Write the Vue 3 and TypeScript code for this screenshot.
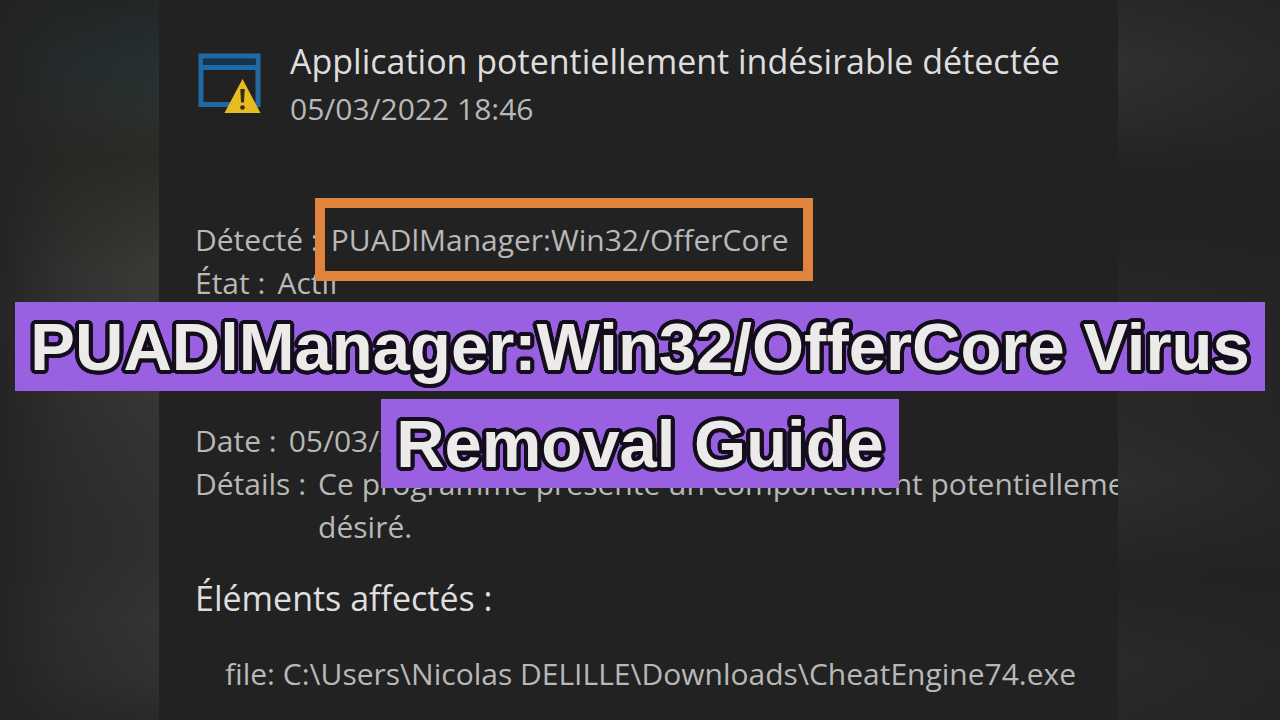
<script setup lang="ts">
interface Field {
  label: string
  value: string
  flagged?: boolean
}

const detection: Field[] = [
  { label: 'Détecté :', value: 'PUADlManager:Win32/OfferCore', flagged: true },
  { label: 'État :', value: 'Actif' },
]

const context: Field[] = [
  { label: 'Date :', value: '05/03/2022' },
  { label: 'Détails :', value: 'Ce programme présente un comportement potentiellement\ndésiré.' },
]

const titleLines: string[] = ['PUADlManager:Win32/OfferCore Virus', 'Removal Guide']
</script>

<template>
  <main class="stage">
    <div class="side side-left"></div>
    <section class="panel">
      <header class="alert">
        <svg class="alert-icon" viewBox="0 0 64 64" aria-hidden="true">
          <rect x="3" y="6" width="57" height="48.500" fill="none" stroke="#2069a3" stroke-width="5" />
          <path d="M5 12H58" stroke="#17344e" stroke-width="6" />
          <path d="M2 17.500H61" stroke="#2069a3" stroke-width="5" />
          <path d="M44.500 29L62.500 63H26.500Z" fill="#e9bb22" />
          <path d="M42.300 39h4.400l-.7 13.500h-3z" fill="#3a2b10" />
          <circle cx="44.500" cy="57.500" r="2.300" fill="#3a2b10" />
        </svg>
        <div>
          <h2 class="alert-title">Application potentiellement indésirable détectée</h2>
          <p class="alert-date">05/03/2022 18:46</p>
        </div>
      </header>

      <dl class="fields detection">
        <div v-for="f in detection" :key="f.label" class="field">
          <dt>{{ f.label }}</dt>
          <dd :class="{ flagged: f.flagged }">{{ f.value }}</dd>
        </div>
      </dl>

      <dl class="fields context">
        <div v-for="f in context" :key="f.label" class="field">
          <dt>{{ f.label }}</dt>
          <dd>{{ f.value }}</dd>
        </div>
      </dl>

      <h3 class="affected">Éléments affectés :</h3>
      <p class="file">file: C:\Users\Nicolas DELILLE\Downloads\CheatEngine74.exe</p>
    </section>
    <div class="side side-right"></div>

    <h1 class="banner">
      <span v-for="line in titleLines" :key="line" class="banner-line">{{ line }}</span>
    </h1>
  </main>
</template>

<style>
body {
  margin: 0;
  background: #222;
}
</style>

<style scoped>
.stage {
  position: relative;
  display: grid;
  grid-template-columns: 159fr 959fr 162fr;
  min-height: 100vh;
  overflow: hidden;
  background: #222;
  font-family: "Open Sans", "Noto Sans", sans-serif;
}

.side-left {
  background:
    linear-gradient(90deg, rgba(34, 34, 34, 0.9) 0%, rgba(34, 34, 34, 0.4) 40%, rgba(34, 34, 34, 0) 100%),
    linear-gradient(180deg, #222626 0%, #263032 9%, #2b302e 15%, #2b2a25 22%, #34322e 30%, #3b3a37 38%, #3a3a3a 46%, #343434 60%, #303030 72%, #303030 78%, #343434 86%, #313131 94%, #292929 100%);
}

.side-right {
  background:
    linear-gradient(90deg, rgba(34, 34, 34, 0) 0%, rgba(34, 34, 34, 0.6) 100%),
    linear-gradient(180deg, #282828 0%, #303030 9%, #2b2b2b 16%, #232323 23%, #232323 33%, #292929 45%, #292929 58%, #2e2e2e 67%, #292929 73%, #232323 80%, #2a2a2a 92%, #272727 100%);
}

.panel {
  box-sizing: border-box;
  min-width: 0;
  padding: 37px 0 20px 36px;
  overflow: hidden;
  background: #222;
  color: #b8b8b8;
  font-size: 30px;
  line-height: 43px;
}

.alert {
  display: flex;
  gap: 28px;
}

.alert-icon {
  flex: none;
  width: 64px;
  height: 64px;
  margin: 13px 0 0 3px;
}

.alert-title,
.alert-date,
.affected,
.file {
  margin: 0;
  font-weight: 400;
  white-space: nowrap;
}

.alert-title {
  color: #dedede;
  font-size: 34px;
  line-height: 48px;
}

.alert-date {
  margin-top: 2px;
}

.fields {
  margin: 0;
}

.detection {
  margin-top: 88px;
}

.context {
  margin-top: 115px;
}

.field {
  display: flex;
  gap: 12px;
}

.field dt {
  flex: none;
}

.field dd {
  margin: 0;
  white-space: pre;
}

.flagged {
  position: relative;
}

.flagged::after {
  content: "";
  position: absolute;
  z-index: 1;
  top: -20px;
  right: -24px;
  bottom: -20px;
  left: -16px;
  border: 10px solid #e0833c;
}

.affected {
  margin-top: 26px;
  color: #dedede;
  font-size: 34px;
  line-height: 48px;
}

.file {
  margin: 30px 0 0 30px;
}

.banner {
  position: absolute;
  z-index: 2;
  top: 302px;
  right: 0;
  left: 0;
  display: flex;
  flex-direction: column;
  align-items: center;
  gap: 8px;
  margin: 0;
  color: #ecebea;
  font-family: "Liberation Sans", Arial, sans-serif;
  font-size: 67px;
  font-weight: 700;
  line-height: 89px;
}

.banner-line {
  --ink: #140d1c;
  padding: 0 15px;
  background: #9a60e2;
  white-space: nowrap;
  /* Rounded outline built from a ring of hard shadows */
  text-shadow:
    4px 0 var(--ink), -4px 0 var(--ink), 0 4px var(--ink), 0 -4px var(--ink),
    4px 1px var(--ink), 4px -1px var(--ink), -4px 1px var(--ink), -4px -1px var(--ink),
    1px 4px var(--ink), -1px 4px var(--ink), 1px -4px var(--ink), -1px -4px var(--ink),
    3px 2px var(--ink), 3px -2px var(--ink), -3px 2px var(--ink), -3px -2px var(--ink),
    2px 3px var(--ink), -2px 3px var(--ink), 2px -3px var(--ink), -2px -3px var(--ink),
    3px 3px var(--ink), 3px -3px var(--ink), -3px 3px var(--ink), -3px -3px var(--ink),
    2px 0 var(--ink), -2px 0 var(--ink), 0 2px var(--ink), 0 -2px var(--ink);
}
</style>
